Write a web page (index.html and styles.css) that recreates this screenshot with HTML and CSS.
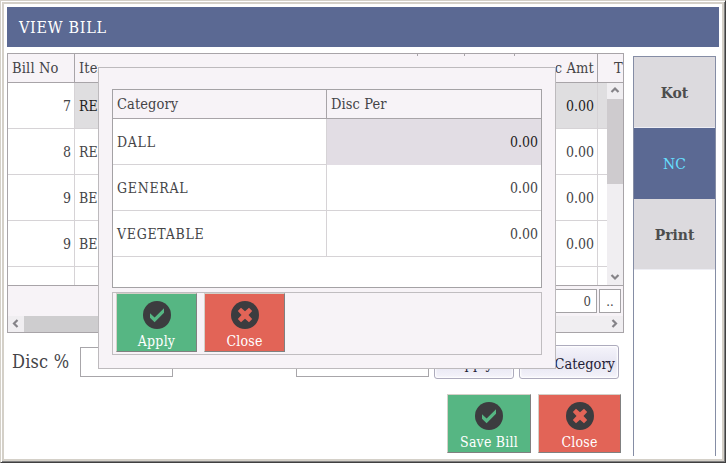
FILE: index.html
```
<!DOCTYPE html>
<html lang="en">
<head>
<meta charset="utf-8">
<title>View Bill</title>
<link rel="stylesheet" href="styles.css">
</head>
<body>
<svg class="defs" aria-hidden="true">
  <symbol id="check" viewBox="0 0 28 28"><circle cx="14" cy="14" r="14" fill="#3c3c3f"/><path class="mark" d="M7 12.3 L11.6 16.6 L21 7.3 V11.7 L11.6 21.2 L7 16.8Z"/></symbol>
  <symbol id="cross" viewBox="0 0 28 28"><circle cx="14" cy="14" r="14" fill="#3c3c3f"/><path class="mark" d="M6.8 10 L10 6.8 L14 10.3 L18 6.8 L21.2 10 L17.5 14 L21.2 18 L18 21.2 L14 17.7 L10 21.2 L6.8 18 L10.5 14Z"/></symbol>
</svg>
<div class="window">
  <header class="title"><span>VIEW BILL</span></header>
  <div class="body">
    <main class="main">
      <section class="bills">
        <div class="bill-row bill-head"><div>Bill No</div><div>Item</div><div></div><div></div><div class="num">Disc Amt</div><div class="total">T</div></div>
        <div class="rows-wrap">
          <div class="rows">
            <div class="bill-row selected"><div class="num">7</div><div>RE</div><div></div><div></div><div class="num">0.00</div><div></div></div>
            <div class="bill-row"><div class="num">8</div><div>RE</div><div></div><div></div><div class="num">0.00</div><div></div></div>
            <div class="bill-row"><div class="num">9</div><div>BE</div><div></div><div></div><div class="num">0.00</div><div></div></div>
            <div class="bill-row"><div class="num">9</div><div>BE</div><div></div><div></div><div class="num">0.00</div><div></div></div>
            <div class="bill-row"><div></div><div></div><div></div><div></div><div></div><div></div></div>
          </div>
          <div class="vbar">
            <svg class="arrow" viewBox="0 0 16 16"><path d="M4.5 9 L8 5.5 L11.5 9"/></svg>
            <div class="vthumb"></div>
            <svg class="arrow" viewBox="0 0 16 16"><path d="M4.5 6 L8 9.5 L11.5 6"/></svg>
          </div>
        </div>
        <div class="summary"><div class="sum-box">0</div><div class="more">..</div></div>
        <div class="hbar">
          <svg class="arrow" viewBox="0 0 16 16"><path d="M9.5 4 L6 7.5 L9.5 11"/></svg>
          <div class="hthumb"></div>
          <svg class="arrow" viewBox="0 0 16 16"><path d="M5.5 4 L9 7.5 L5.5 11"/></svg>
        </div>
      </section>
      <div class="discount">
        <label class="disc-label">Disc %</label>
        <div class="field pct"></div>
        <div class="field amt"></div>
        <div class="soft apply-soft">Apply</div>
        <div class="soft cat-soft">Category</div>
      </div>
      <div class="actions">
        <div class="btn green save"><svg class="ico"><use href="#check"/></svg><span>Save Bill</span></div>
        <div class="btn red quit"><svg class="ico"><use href="#cross"/></svg><span>Close</span></div>
      </div>
    </main>
    <aside class="side">
      <div class="tab">Kot</div>
      <div class="tab active">NC</div>
      <div class="tab">Print</div>
    </aside>
  </div>
</div>
<div class="dialog">
  <div class="cats">
    <div class="cat-row cat-head"><div>Category</div><div>Disc Per</div></div>
    <div class="cat-row"><div>DALL</div><div class="num picked">0.00</div></div>
    <div class="cat-row"><div>GENERAL</div><div class="num">0.00</div></div>
    <div class="cat-row"><div>VEGETABLE</div><div class="num">0.00</div></div>
  </div>
  <div class="dialog-actions">
    <div class="btn green"><svg class="ico"><use href="#check"/></svg><span>Apply</span></div>
    <div class="btn red"><svg class="ico"><use href="#cross"/></svg><span>Close</span></div>
  </div>
</div>
</body>
</html>
```
FILE: styles.css
```
*, *::before { box-sizing: border-box; }
body { margin: 0; width: 726px; height: 463px; overflow: hidden; position: relative; color: #444447; font: 14px/20px "DejaVu Serif Condensed", "DejaVu Serif", serif; font-stretch: condensed; }
.defs { position: absolute; width: 0; height: 0; }
.window { height: 463px; padding: 3px; border: 4px solid #d4d0c8; background: #fff; position: relative; }
.window::before { content: ""; position: absolute; left: -4px; top: -4px; width: 726px; height: 463px; border: 1px solid; border-color: #d4d0c8 #404040 #404040 #d4d0c8; box-shadow: inset 1px 1px #fff, inset -1px -1px #808080; pointer-events: none; }
.title { height: 40px; width: 712px; background: #5b6993; color: #fff; padding: 0 12px; font-size: 16px; line-height: 42px; }
.title span { letter-spacing: .7px; }
.body { display: flex; }
.main { width: 617px; padding-top: 6px; }
.bills { height: 280px; border: 1px solid #a8a4a8; background: #f7f3f7; }
.bill-row { display: grid; grid-template-columns: 67px 343px 47px 50px 83px 26px; height: 46px; border-bottom: 1px solid #d6d3d6; background: #fff; overflow: hidden; }
.bill-row > div { border-right: 1px solid #d6d3d6; padding: 0 4px; line-height: 47px; white-space: nowrap; }
.bill-row > div:last-child { border-right: 0; }
.num { text-align: right; }
.bill-row > .num { padding-right: 3px; }
.bill-head { height: 29px; background: #f7f3f7; border-color: #a8a4a8; }
.bill-head > div { border-color: #a8a4a8; line-height: 28px; font-size: 14.5px; letter-spacing: .15px; }
.bill-head > .total { padding: 0 0 0 16px; }
.selected > div:not(:first-child) { background: #dfdee0; color: #222; }
.rows-wrap { display: flex; height: 203px; border-bottom: 1px solid #a8a4a8; }
.rows { width: 599px; overflow: hidden; }
.vbar { width: 16px; display: flex; flex-direction: column; background: #f0eef1; }
.arrow { width: 16px; height: 16px; fill: none; stroke: #858388; stroke-width: 2.2; flex: none; display: block; }
.vthumb { height: 85px; background: #cecbce; margin-bottom: auto; }
.summary { height: 30px; padding: 3px 2px 0 0; display: flex; justify-content: flex-end; gap: 2px; }
.sum-box, .more { height: 24px; border: 1px solid #a4a2a5; background: #fff; line-height: 23px; font-size: 13px; }
.sum-box { width: 100px; padding-right: 5px; text-align: right; }
.more { width: 22px; text-align: center; }
.hbar { height: 16px; display: flex; justify-content: space-between; background: #f0eef1; }
.hthumb { width: 390px; background: #cecdcf; margin-right: auto; }
.discount { height: 46px; padding-top: 12px; display: flex; }
.disc-label { width: 73px; padding-left: 5px; font-size: 18px; letter-spacing: .2px; line-height: 34px; white-space: nowrap; }
.field { height: 30px; margin-top: 2px; border: 1px solid #a8a6aa; background: #fff; }
.pct { width: 93px; }
.amt { width: 133px; margin-left: 123px; }
.soft { height: 34px; border: 1px solid #adabbd; border-radius: 3px; background: linear-gradient(#f5f4fb, #e6e5f2 55%, #f4f3fa); box-shadow: inset 0 0 2px 1px #fff; color: #1f1c35; text-align: center; line-height: 36px; font-size: 14.5px; white-space: nowrap; }
.apply-soft { width: 80px; margin-left: 5px; }
.cat-soft { width: 100px; margin-left: 5px; text-align: right; padding-right: 3px; }
.actions { display: flex; justify-content: flex-end; gap: 7px; padding: 15px 3px 0 0; }
.btn { width: 81px; height: 59px; color: #fff; text-align: center; font-size: 14px; border: 1px solid; border-color: #d4d0c8 #808080 #808080 #d4d0c8; }
.btn span { display: block; line-height: 24px; letter-spacing: .2px; white-space: nowrap; }
.actions .btn { padding-top: 7px; }
.save { width: 84px; }
.quit { width: 83px; }
.ico { display: block; width: 28px; height: 28px; margin: 0 auto; }
.green { background: #56b683; }
.red { background: #e26457; }
.green .ico { color: #56b683; }
.red .ico { color: #e26457; }
.mark { fill: currentColor; }
.side { width: 83px; height: 400px; margin: 9px 0 0 9px; border: 1px solid #858da5; border-bottom: 0; }
.tab { height: 71px; background: #dcdade; border-bottom: 1px solid #eeeef4; color: #4d4d4d; text-align: center; font-weight: bold; font-size: 15.5px; line-height: 72px; }
.tab.active { background: #5b6993; border-color: #5b6993; color: #66dfff; font-weight: normal; }
.dialog { position: absolute; left: 98px; top: 67px; width: 458px; height: 302px; padding: 21px 13px; border: 1px solid #bdbabd; background: #f7f3f7; }
.dialog::before { content: ""; position: absolute; left: -1px; top: -12px; width: 458px; height: 11px; background: #f7f3f7; }
.cats { height: 199px; border: 1px solid #a4a2a5; background: #fff; }
.cat-row { display: grid; grid-template-columns: 214px 214px; height: 46px; border-bottom: 1px solid #d6d3d6; }
.cat-row > div { padding: 0 4px; line-height: 46px; letter-spacing: .7px; border-right: 1px solid #d6d3d6; }
.cat-row > .num { letter-spacing: 0; }
.cat-row > div:last-child { border-right: 0; padding-right: 3px; }
.cat-head { height: 29px; background: #f7f3f7; border-color: #a8a4a8; }
.cat-head > div { line-height: 28px; font-size: 14.5px; letter-spacing: .1px; border-color: #a8a4a8; }
.cat-row > .picked { background: #e2dde4; color: #222; }
.dialog-actions { display: flex; gap: 7px; height: 63px; margin-top: 4px; padding: 0 3px; border: 1px solid #c0bdc0; }
.dialog-actions .btn { padding-top: 7px; }
```
